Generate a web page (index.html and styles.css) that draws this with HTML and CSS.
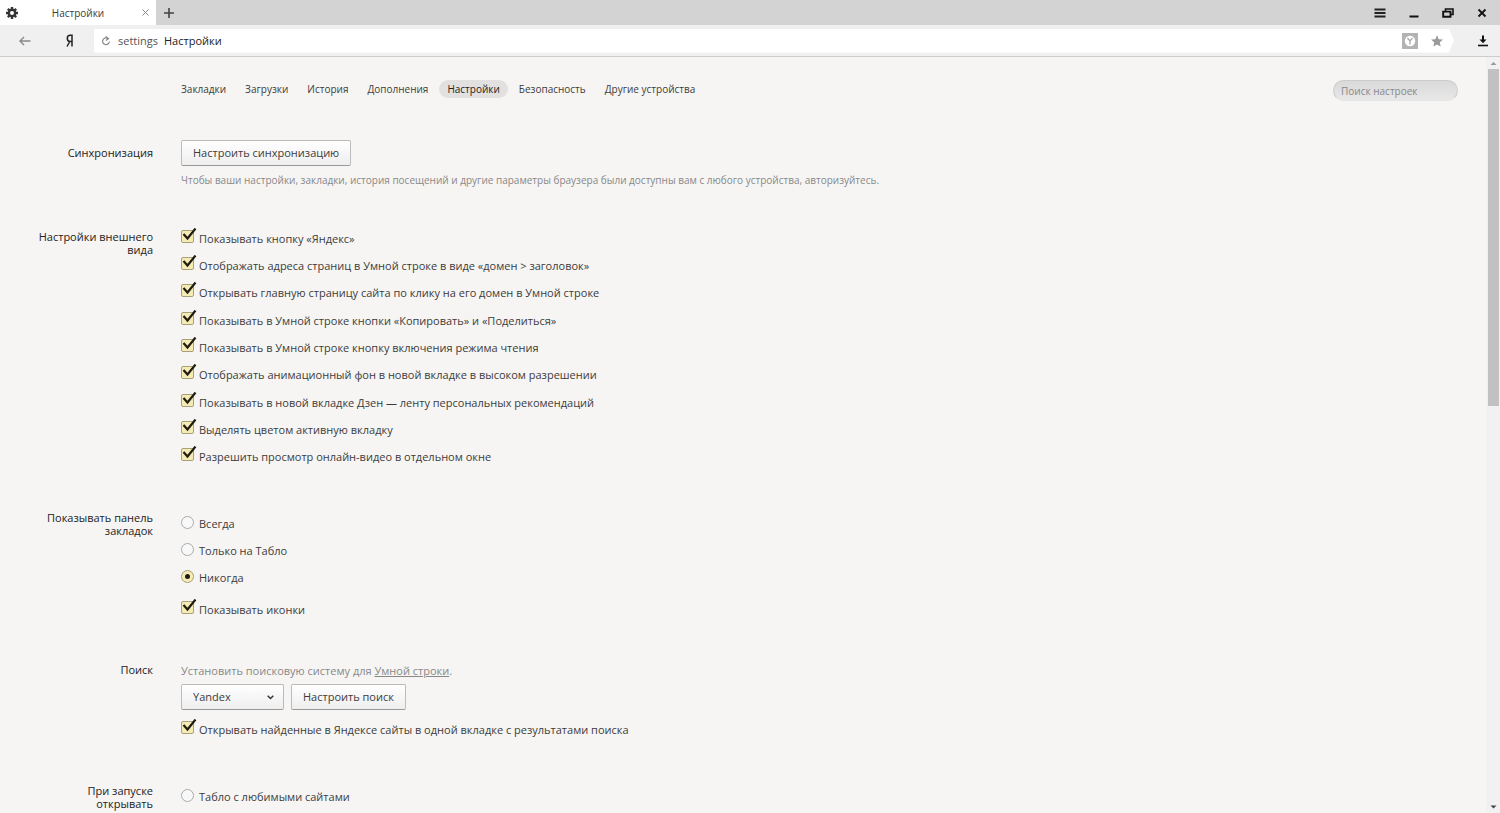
FILE: index.html
```html
<!DOCTYPE html>
<html lang="ru">
<head>
<meta charset="utf-8">
<title>Настройки</title>
<link rel="stylesheet" href="styles.css">
</head>
<body>
<header class="tabbar">
  <div class="tab">
    <svg class="tab-icon" width="12" height="12" viewBox="0 0 12 12"><circle cx="6" cy="6" r="3.2" fill="none" stroke="#333" stroke-width="2.4"/><path d="M6 0v2.500M6 9.500V12M0 6h2.500M9.500 6H12M1.800 1.800l1.700 1.700M8.500 8.500l1.700 1.700M1.800 10.200l1.700-1.700M8.500 3.500l1.700-1.700" stroke="#333" stroke-width="2.400"/></svg>
    <span class="tab-title">Настройки</span>
    <button class="icon-btn" aria-label="Закрыть вкладку"><svg width="7" height="7" viewBox="0 0 7 7"><path d="M.5.5l6 6M6.500.5l-6 6" stroke="#888" stroke-width="1"/></svg></button>
  </div>
  <button class="icon-btn new-tab" aria-label="Новая вкладка"><svg width="10" height="10" viewBox="0 0 10 10"><path d="M5 0v10M0 5h10" stroke="#444" stroke-width="1.600"/></svg></button>
  <div class="window-controls">
    <button class="icon-btn" aria-label="Меню"><svg width="12" height="12" viewBox="0 0 12 12"><path d="M.5 2.500h11M.5 6h11M.5 9.500h11" stroke="#222" stroke-width="1.900"/></svg></button>
    <button class="icon-btn" aria-label="Свернуть"><svg width="12" height="12" viewBox="0 0 12 12"><path d="M1.500 9.500h9" stroke="#111" stroke-width="2"/></svg></button>
    <button class="icon-btn" aria-label="Развернуть"><svg width="12" height="12" viewBox="0 0 12 12"><path d="M3.500 4V2h7.500v5.500H9" fill="none" stroke="#111" stroke-width="1.600"/><path d="M1.200 4.600h7.300v5.200H1.200z" fill="none" stroke="#111" stroke-width="1.900"/></svg></button>
    <button class="icon-btn" aria-label="Закрыть"><svg width="12" height="12" viewBox="0 0 12 12"><path d="M2.500 2.500l7 7M9.500 2.500l-7 7" stroke="#111" stroke-width="1.800"/></svg></button>
  </div>
</header>
<div class="toolbar">
  <button class="icon-btn back" aria-label="Назад"><svg width="12" height="10" viewBox="0 0 12 10"><path d="M11.500 5H1.500M5 1L1 5l4 4" fill="none" stroke="#888" stroke-width="1.400"/></svg></button>
  <button class="icon-btn home" aria-label="Яндекс"><svg width="9" height="13" viewBox="0 0 9 13"><path d="M7 12.500V1.300H5.200C3.300 1.300 2.300 2.500 2.300 4.300S3.300 7.500 5 7.500H7M4.800 7.500L2 12.500" fill="none" stroke="#222" stroke-width="1.500"/></svg></button>
  <div class="address">
    <button class="icon-btn" aria-label="Обновить"><svg width="10" height="10" viewBox="0 0 10 10"><path d="M7.300 2.700A3.400 3.400 0 1 0 8.400 5.500" fill="none" stroke="#888" stroke-width="1.200"/><path d="M4.800.5L7.500 2.800 4.800 4.600" fill="none" stroke="#888" stroke-width="1.200"/></svg></button>
    <span class="host">settings</span>
    <span class="page-name">Настройки</span>
    <button class="icon-btn protect" aria-label="Защита"><svg width="16" height="16" viewBox="0 0 16 16"><path d="M0 0h16v16H0z" fill="#b3b3b3"/><circle cx="8" cy="8" r="5.200" fill="#fff"/><path d="M5.500 5L8 8l2.500-3M8 8v3.500" fill="none" stroke="#aaa" stroke-width="1.300"/></svg></button>
    <button class="icon-btn" aria-label="В закладки"><svg width="12" height="12" viewBox="0 0 12 12"><path d="M6 .3l1.700 3.900 4.200.4-3.200 2.800 1 4.200L6 9.400l-3.700 2.200 1-4.200L.1 4.600l4.200-.4z" fill="#999"/></svg></button>
  </div>
  <button class="icon-btn download" aria-label="Загрузки"><svg width="10" height="12" viewBox="0 0 10 12"><path d="M5 .5v6" stroke="#111" stroke-width="2"/><path d="M1.500 4.500h7L5 8.200z" fill="#111"/><path d="M0 10.500h10" stroke="#111" stroke-width="1.600"/></svg></button>
</div>
<div class="viewport">
  <div class="page">
    <div class="page-top">
      <nav class="nav">
        <a href="#">Закладки</a><a href="#">Загрузки</a><a href="#">История</a><a href="#">Дополнения</a><a href="#" class="active">Настройки</a><a href="#">Безопасность</a><a href="#">Другие устройства</a>
      </nav>
      <input class="search" type="search" placeholder="Поиск настроек" aria-label="Поиск настроек">
    </div>
    <main class="sections">
      <section class="section sync">
        <h2>Синхронизация</h2>
        <div class="body">
          <button class="btn">Настроить синхронизацию</button>
          <p class="hint">Чтобы ваши настройки, закладки, история посещений и другие параметры браузера были доступны вам с любого устройства, авторизуйтесь.</p>
        </div>
      </section>
      <section class="section">
        <h2>Настройки внешнего вида</h2>
        <div class="body">
          <label class="option"><input type="checkbox" checked>Показывать кнопку «Яндекс»</label>
          <label class="option"><input type="checkbox" checked>Отображать адреса страниц в Умной строке в виде «домен &gt; заголовок»</label>
          <label class="option"><input type="checkbox" checked>Открывать главную страницу сайта по клику на его домен в Умной строке</label>
          <label class="option"><input type="checkbox" checked>Показывать в Умной строке кнопки «Копировать» и «Поделиться»</label>
          <label class="option"><input type="checkbox" checked>Показывать в Умной строке кнопку включения режима чтения</label>
          <label class="option"><input type="checkbox" checked>Отображать анимационный фон в новой вкладке в высоком разрешении</label>
          <label class="option"><input type="checkbox" checked>Показывать в новой вкладке Дзен — ленту персональных рекомендаций</label>
          <label class="option"><input type="checkbox" checked>Выделять цветом активную вкладку</label>
          <label class="option"><input type="checkbox" checked>Разрешить просмотр онлайн-видео в отдельном окне</label>
        </div>
      </section>
      <section class="section">
        <h2>Показывать панель закладок</h2>
        <div class="body radios">
          <label class="option"><input type="radio" name="bookmarks">Всегда</label>
          <label class="option"><input type="radio" name="bookmarks">Только на Табло</label>
          <label class="option"><input type="radio" name="bookmarks" checked>Никогда</label>
          <label class="option spaced"><input type="checkbox" checked>Показывать иконки</label>
        </div>
      </section>
      <section class="section">
        <h2>Поиск</h2>
        <div class="body">
          <p class="note">Установить поисковую систему для <a href="#">Умной строки</a>.</p>
          <div class="controls">
            <select class="btn select" aria-label="Поисковая система"><option>Yandex</option></select>
            <button class="btn">Настроить поиск</button>
          </div>
          <label class="option"><input type="checkbox" checked>Открывать найденные в Яндексе сайты в одной вкладке с результатами поиска</label>
        </div>
      </section>
      <section class="section">
        <h2>При запуске открывать</h2>
        <div class="body radios">
          <label class="option"><input type="radio" name="startup">Табло с любимыми сайтами</label>
        </div>
      </section>
    </main>
  </div>
  <div class="scrollbar">
    <svg class="arrow" width="12" height="12" viewBox="1 0 12 12"><path d="M3.500 8L6.500 5l3 3z" fill="#999"/></svg>
    <div class="track"><div class="thumb"></div></div>
    <svg class="arrow" width="12" height="12" viewBox="1 0 12 12"><path d="M3.500 4.500h6l-3 3z" fill="#444"/></svg>
  </div>
</div>
</body>
</html>
```
FILE: styles.css
```css
* { box-sizing: border-box; }
body {
  margin: 0;
  height: 100vh;
  display: flex;
  flex-direction: column;
  overflow: hidden;
  background: #f6f5f3;
  color: #3c3c3c;
  font: 11px/16px "Open Sans", "Noto Sans", sans-serif;
}
button, input, select { font: inherit; color: inherit; }
h2, p { margin: 0; font-size: inherit; font-weight: normal; }
svg { display: block; }

.icon-btn {
  display: flex;
  align-items: center;
  justify-content: center;
  padding: 0;
  border: 0;
  background: none;
}

.tabbar {
  flex: none;
  display: flex;
  align-items: stretch;
  height: 25px;
  background: #d3d3d3;
}
.tab {
  display: flex;
  align-items: center;
  width: 156px;
  padding: 0 7px 0 6px;
  background: #fff;
}
.tab-title { flex: 1; padding-right: 4px; text-align: center; font-size: 10px; }
.new-tab { width: 26px; }
.window-controls {
  display: flex;
  gap: 22px;
  margin-left: auto;
  padding-right: 12px;
}

.toolbar {
  flex: none;
  display: flex;
  align-items: center;
  height: 32px;
  background: #f0f0f0;
  border-bottom: 1px solid #ccc;
}
.back { width: 49px; }
.home { width: 45px; padding-right: 5px; }
.address {
  flex: 1;
  display: flex;
  align-items: center;
  height: 24px;
  padding: 0 11px 0 7px;
  background: #fff;
  clip-path: polygon(0 0, calc(100% - 5px) 0, 100% 50%, calc(100% - 5px) 100%, 0 100%);
}
.host { padding: 0 6px 0 7px; color: #555; }
.page-name { color: #222; }
.protect { margin: 0 13px 0 auto; }
.download { width: 46px; padding-left: 12px; }

.viewport { flex: 1; display: flex; min-height: 0; }
.page { flex: 1; overflow: hidden; }
.page-top {
  display: flex;
  align-items: flex-start;
  justify-content: space-between;
  padding: 23px 28px 0 173px;
}
.nav { display: flex; gap: 3px; font-size: 10px; line-height: 18px; }
.nav a {
  padding: 0 8px;
  border-radius: 9px;
  color: #3c3c3c;
  text-decoration: none;
}
.nav .active { background: #e2e1df; color: #222; }
.search {
  width: 125px;
  height: 21px;
  padding: 0 7px;
  border: 1px solid #ccc;
  border-bottom-color: #e4e4e4;
  border-radius: 11px;
  background: linear-gradient(#d9d9d9, #e8e8e8);
  font-size: 10px;
  outline: 0;
}
.search::placeholder { color: #888; }

.sections { display: flex; flex-direction: column; gap: 35px; padding-top: 39px; }
.section { display: flex; gap: 28px; }
.section h2 {
  flex: none;
  width: 153px;
  padding-left: 30px;
  line-height: 13px;
  text-align: right;
  color: #222;
}
.sync { padding-bottom: 7px; }
.sync h2 { padding-top: 6px; }
.body { flex: 1; }
.radios { padding-top: 4px; }
.hint { padding-top: 6px; font-size: 10px; color: #888; }
.note { color: #888; }
.note a { color: inherit; }
.controls { display: flex; gap: 7px; padding: 5px 0 11px; }

.btn {
  height: 26px;
  padding: 0 11px;
  border: 1px solid #bbb;
  border-bottom-color: #999;
  border-radius: 2px;
  background: linear-gradient(#fff, #eee);
}
.select {
  appearance: none;
  width: 103px;
  background:
    url("data:image/svg+xml,%3Csvg xmlns='http://www.w3.org/2000/svg' width='7' height='5'%3E%3Cpath d='M.7.8l2.800 2.700L6.300.8' fill='none' stroke='%23333' stroke-width='1.500'/%3E%3C/svg%3E") no-repeat right 9px center,
    linear-gradient(#fff, #eee);
}

.option { display: flex; gap: 2px; line-height: 18px; height: 27px; }
.option:nth-child(3n) { height: 28px; }
.option input {
  appearance: none;
  flex: none;
  width: 16px;
  height: 16px;
  margin: 0;
}
.option input[type="checkbox"] {
  margin-top: -2px;
  background: url("data:image/svg+xml,%3Csvg xmlns='http://www.w3.org/2000/svg' width='16' height='16'%3E%3Crect x='.5' y='2.500' width='12' height='12' rx='1.500' fill='%23f5ebb5' stroke='%23a89f7c'/%3E%3Cpath d='M2.500 6l4 4.500L14.500.5' fill='none' stroke='%23221c10' stroke-width='2.200'/%3E%3C/svg%3E");
}
.option input[type="radio"] {
  background: url("data:image/svg+xml,%3Csvg xmlns='http://www.w3.org/2000/svg' width='16' height='16'%3E%3Ccircle cx='6.500' cy='7.500' r='6' fill='%23f8f8f8' stroke='%23aaa'/%3E%3C/svg%3E");
}
.option input[type="radio"]:checked {
  background: url("data:image/svg+xml,%3Csvg xmlns='http://www.w3.org/2000/svg' width='16' height='16'%3E%3Ccircle cx='6.500' cy='7.500' r='6' fill='%23f5ebb5' stroke='%23a89f7c'/%3E%3Ccircle cx='6.500' cy='7.500' r='2.500' fill='%23221c10'/%3E%3C/svg%3E");
}
.option.spaced { margin-top: 4px; }

.scrollbar {
  flex: none;
  display: flex;
  flex-direction: column;
  width: 14px;
  padding-left: 2px;
  background: #f1f1f1;
}
.track { flex: 1; padding-right: 1px; }
.thumb { height: 46%; background: #c1c1c1; }
```
